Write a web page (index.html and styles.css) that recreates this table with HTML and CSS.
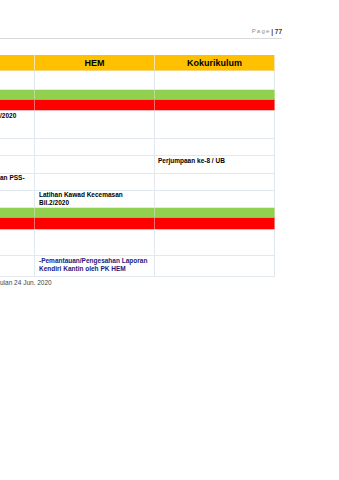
FILE: index.html
```html
<!DOCTYPE html>
<html>
<head>
<meta charset="utf-8">
<link rel="stylesheet" href="styles.css">
</head>
<body>
<div class="page-head"><span class="pg">P a g e</span><span class="num">| 77</span></div>
<div class="table">
  <div class="row h-yellow yellow"><div class="cell"></div><div class="cell th">HEM</div><div class="cell th">Kokurikulum</div></div>
  <div class="row h-white"><div class="cell"></div><div class="cell"></div><div class="cell"></div></div>
  <div class="row h-green green"><div class="cell"></div><div class="cell"></div><div class="cell"></div></div>
  <div class="row h-red red"><div class="cell"></div><div class="cell"></div><div class="cell"></div></div>
  <div class="row h-r1"><div class="cell c1 t1">/2020</div><div class="cell"></div><div class="cell"></div></div>
  <div class="row h-r2"><div class="cell"></div><div class="cell"></div><div class="cell"></div></div>
  <div class="row h-r3"><div class="cell"></div><div class="cell"></div><div class="cell c3 t1">Perjumpaan ke-8 / UB</div></div>
  <div class="row h-r4"><div class="cell c1 t0">an PSS-</div><div class="cell"></div><div class="cell"></div></div>
  <div class="row h-r5"><div class="cell"></div><div class="cell c2 t0">Latihan Kawad Kecemasan<br>Bil.2/2020</div><div class="cell"></div></div>
  <div class="row h-green green"><div class="cell"></div><div class="cell"></div><div class="cell"></div></div>
  <div class="row h-red2 red"><div class="cell"></div><div class="cell"></div><div class="cell"></div></div>
  <div class="row h-r6"><div class="cell"></div><div class="cell"></div><div class="cell"></div></div>
  <div class="row h-r7"><div class="cell"></div><div class="cell c2 t1 navy">-Pemantauan/Pengesahan Laporan<br>Kendiri Kantin oleh PK HEM</div><div class="cell"></div></div>
</div>
<div class="foot">ulan 24 Jun. 2020</div>
</body>
</html>
```
FILE: styles.css
```css
html, body {
  margin: 0;
  padding: 0;
  background: #ffffff;
}
body {
  font-family: "Liberation Sans", Arial, sans-serif;
  color: #000;
}
.page-head {
  width: 282px;
  height: 39px;
  box-sizing: border-box;
  border-bottom: 1px solid #d9d9d9;
  display: flex;
  justify-content: flex-end;
  align-items: flex-end;
  padding-bottom: 2px;
  line-height: 9px;
}
.pg {
  font-size: 6px;
  color: #8c8c8c;
  margin-right: 2px;
  letter-spacing: -0.2px;
}
.num {
  font-size: 6.5px;
  color: #3a3a3a;
  font-weight: bold;
}
.table {
  margin-top: 16px;
  width: 275px;
}
.row {
  display: grid;
  grid-template-columns: 35px 120px 120px;
  box-sizing: border-box;
  border-bottom: 1px solid #e2e8ef;
}
.cell {
  box-sizing: border-box;
  border-right: 1px solid #e2e8ef;
  font-size: 6.5px;
  font-weight: bold;
  line-height: 8px;
  overflow: hidden;
  white-space: nowrap;
}
.yellow { background: #ffc000; border-bottom-color: #f5d37a; }
.yellow .cell { border-right-color: #f7e3b0; }
.green { background: #92d050; border-bottom-color: #d9a04a; }
.green .cell { border-right-color: #b8df90; }
.red { background: #ff0000; border-bottom-color: #f2b8b8; }
.red .cell { border-right-color: #ff6a6a; }
.th {
  font-size: 9px;
  line-height: 16px;
  text-align: center;
}
.h-yellow { height: 16px; }
.h-white { height: 19px; }
.h-green { height: 10px; }
.h-red { height: 11px; }
.h-red2 { height: 12px; }
.h-r1 { height: 28px; }
.h-r2 { height: 17px; }
.h-r3 { height: 18px; }
.h-r4 { height: 17px; }
.h-r5 { height: 17px; }
.h-r6 { height: 26px; }
.h-r7 { height: 21px; }
.c1 { padding-left: 0; }
.c2 { padding-left: 4px; }
.c3 { padding-left: 3px; }
.t0 { padding-top: 0; }
.t1 { padding-top: 1px; }
.navy { color: #1a1a80; line-height: 7.5px; }
.foot {
  margin-top: 2px;
  font-size: 6.5px;
  line-height: 8px;
  color: #444;
}
```
